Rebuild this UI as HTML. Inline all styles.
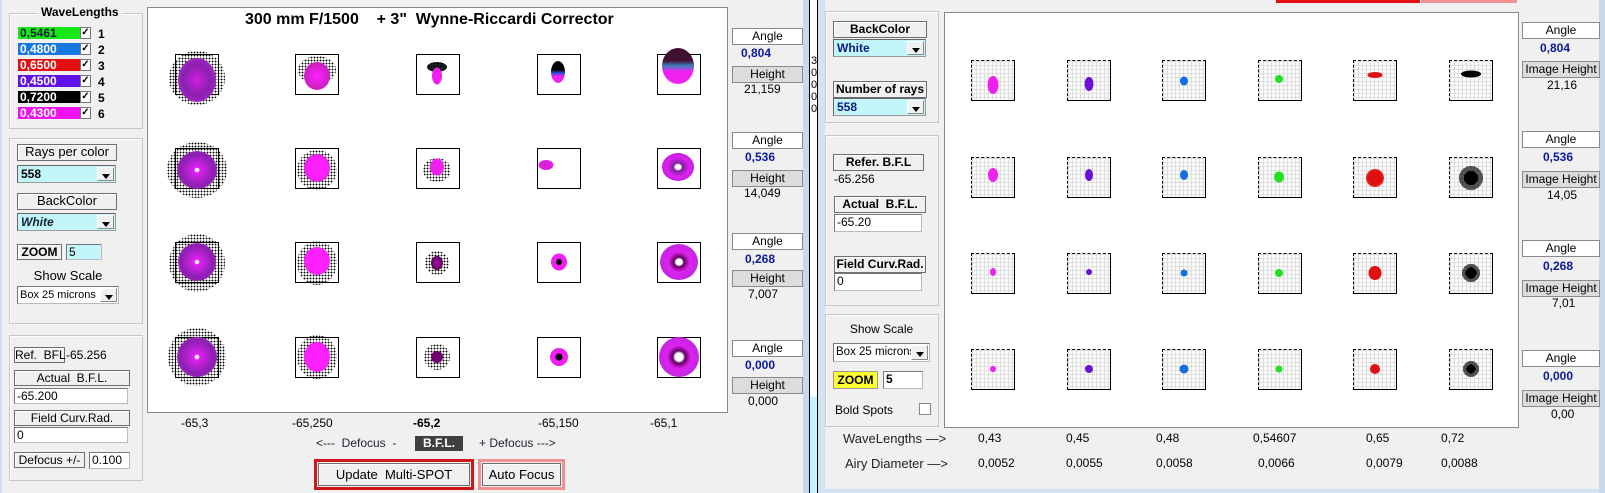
<!DOCTYPE html>
<html><head><meta charset="utf-8"><style>
*{margin:0;padding:0;box-sizing:border-box}
body{width:1605px;height:493px;background:#f0f0f0;position:relative;overflow:hidden;font-family:"Liberation Sans",sans-serif;font-size:12px;color:#000}
div,span{position:absolute}
.btn{background:#f0f0f0;border:1px solid #6e6e6e;box-shadow:inset 1px 1px #fff;text-align:center;white-space:nowrap;line-height:14px}
.gbtn{background:#dcdcdc;border:1px solid #8a8a8a;text-align:center;line-height:14px;white-space:nowrap}
.wbox{background:#fff;border:1px solid #8a8a8a;text-align:center;line-height:14px}
.inp{background:#fff;border:1px solid #bbb;border-top-color:#777;border-left-color:#777;line-height:15px;padding-left:2px;white-space:nowrap}
.cmb{background:#c2f6fb;border:1px solid #999;border-top-color:#666;border-left-color:#666;padding-left:3px;font-weight:bold;line-height:16px}
.arr{right:1px;top:1px;bottom:1px;width:17px;background:#f0f0f0;border:1px solid #888;border-top-color:#fff;border-left-color:#fff}
.arr:after{content:"";position:absolute;left:4px;top:6px;border:4px solid transparent;border-top:5px solid #000}
.grp{border:1px solid #c8c8c8;box-shadow:inset 1px 1px #fff}
.sq{border:1.5px solid #000;background:#fff;width:44px;height:41px}
.gq{width:44px;height:41px;border:1px dashed #000;border-right:1.5px solid #000;border-bottom:1.5px solid #000;background-color:#fbfbfb;background-image:linear-gradient(#dedede 1px,transparent 1px),linear-gradient(90deg,#dedede 1px,transparent 1px);background-size:4px 4px}
.dot{border-radius:50%;transform:translate(-50%,-50%)}
.dz{border-radius:50%;transform:translate(-50%,-50%);background-image:radial-gradient(#000 0.7px,transparent 1.1px);background-size:3px 3px}
.blue{color:#0a1a9a;font-weight:bold}
.ck{left:80px;width:11px;height:12px;background:#fff;border:1px solid #777;font-size:10px;line-height:10px;text-align:center;font-weight:bold}
</style></head><body>
<div style="left:0;top:0;width:2px;height:493px;background:#cfdff2"></div>

<div class="grp" style="left:9px;top:13px;width:134px;height:116px"></div>
<div style="left:38px;top:5px;background:#f0f0f0;padding:0 3px;font-weight:bold;font-size:12px">WaveLengths</div>
<div style="left:18px;top:27px;width:73px;height:12px;background:#18e818;color:#123;font-weight:bold;line-height:12px;padding-left:2px">0,5461</div>
<div style="left:18px;top:43px;width:73px;height:12px;background:#1878e0;color:#fff;font-weight:bold;line-height:12px;padding-left:2px">0,4800</div>
<div style="left:18px;top:59px;width:73px;height:12px;background:#e01010;color:#fff;font-weight:bold;line-height:12px;padding-left:2px">0,6500</div>
<div style="left:18px;top:75px;width:73px;height:12px;background:#6010e8;color:#fff;font-weight:bold;line-height:12px;padding-left:2px">0,4500</div>
<div style="left:18px;top:91px;width:73px;height:12px;background:#000;color:#fff;font-weight:bold;line-height:12px;padding-left:2px">0,7200</div>
<div style="left:18px;top:107px;width:73px;height:12px;background:#f010f0;color:#fff;font-weight:bold;line-height:12px;padding-left:2px">0,4300</div>
<div class="ck" style="top:27px">✓</div>
<div class="ck" style="top:43px">✓</div>
<div class="ck" style="top:59px">✓</div>
<div class="ck" style="top:75px">✓</div>
<div class="ck" style="top:91px">✓</div>
<div class="ck" style="top:107px">✓</div>
<div style="left:98px;top:26px;font-weight:bold;line-height:16px">1<br>2<br>3<br>4<br>5<br>6</div>

<div class="grp" style="left:9px;top:138px;width:134px;height:186px"></div>
<div class="btn" style="left:17px;top:144px;width:100px;height:17px;font-size:13px">Rays per color</div>
<div class="cmb" style="left:17px;top:165px;width:99px;height:18px">558<div class="arr"></div></div>
<div class="btn" style="left:17px;top:193px;width:100px;height:17px;font-size:13px">BackColor</div>
<div class="cmb" style="left:17px;top:213px;width:99px;height:18px;font-style:italic;color:#123">White<div class="arr"></div></div>
<div class="btn" style="left:17px;top:244px;width:45px;height:16px;font-weight:bold">ZOOM</div>
<div class="inp" style="left:66px;top:244px;width:36px;height:16px;background:#c2f6fb">5</div>
<div style="left:17px;top:268px;width:102px;text-align:center;font-size:13px">Show Scale</div>
<div class="inp" style="left:17px;top:286px;width:102px;height:18px;font-size:11px;line-height:16px;background:#fff">Box 25 microns<div class="arr"></div></div>

<div class="grp" style="left:9px;top:335px;width:134px;height:146px"></div>
<div class="btn" style="left:14px;top:347px;width:51px;height:16px">Ref.&nbsp; BFL</div>
<div style="left:66px;top:348px">-65.256</div>
<div class="btn" style="left:14px;top:370px;width:116px;height:16px">Actual&nbsp; B.F.L.</div>
<div class="inp" style="left:14px;top:388px;width:114px;height:16px">-65.200</div>
<div class="btn" style="left:14px;top:410px;width:116px;height:16px">Field Curv.Rad.</div>
<div class="inp" style="left:14px;top:427px;width:114px;height:16px">0</div>
<div class="btn" style="left:14px;top:452px;width:71px;height:16px">Defocus +/-</div>
<div class="inp" style="left:89px;top:452px;width:41px;height:17px">0.100</div>

<div style="left:147px;top:7px;width:581px;height:406px;background:#fff;border:1px solid #888"></div>
<div style="left:245px;top:11px;font-weight:bold;font-size:16px;white-space:pre">300 mm F/1500    + 3"  Wynne-Riccardi Corrector</div>

<div class="sq" style="left:175px;top:54px"></div><div class="sq" style="left:295px;top:54px"></div><div class="sq" style="left:416px;top:54px"></div><div class="sq" style="left:537px;top:54px"></div><div class="sq" style="left:657px;top:54px"></div>
<div class="sq" style="left:175px;top:148px"></div><div class="sq" style="left:295px;top:148px"></div><div class="sq" style="left:416px;top:148px"></div><div class="sq" style="left:537px;top:148px"></div><div class="sq" style="left:657px;top:148px"></div>
<div class="sq" style="left:175px;top:242px"></div><div class="sq" style="left:295px;top:242px"></div><div class="sq" style="left:416px;top:242px"></div><div class="sq" style="left:537px;top:242px"></div><div class="sq" style="left:657px;top:242px"></div>
<div class="sq" style="left:175px;top:337px"></div><div class="sq" style="left:295px;top:337px"></div><div class="sq" style="left:416px;top:337px"></div><div class="sq" style="left:537px;top:337px"></div><div class="sq" style="left:657px;top:337px"></div>

<div class="dz" style="left:197px;top:78px;width:56px;height:54px"></div>
<div class="dot" style="left:197px;top:80px;width:38px;height:44px;background:radial-gradient(#d020e0,#8a20b0 50%,#c030e0)"></div>
<div class="dz" style="left:317px;top:70px;width:38px;height:28px"></div>
<div class="dot" style="left:317px;top:76px;width:26px;height:28px;background:radial-gradient(#ff20ff,#b020a0)"></div>
<div class="dz" style="left:437px;top:67px;width:20px;height:10px;background-color:#222"></div>
<div class="dot" style="left:437px;top:76px;width:10px;height:17px;background:#f020f0"></div>
<div class="dot" style="left:558px;top:72px;width:14px;height:22px;background:linear-gradient(#000 40%,#3050e0 55%,#f020f0 70%)"></div>
<div class="dot" style="left:678px;top:66px;width:32px;height:36px;background:linear-gradient(#401030 35%,#4080c0 50%,#f020f0 65%)"></div>
<div class="dz" style="left:197px;top:170px;width:60px;height:56px"></div>
<div class="dot" style="left:197px;top:170px;width:40px;height:38px;background:radial-gradient(#fff 0 6%,#e020f0 10%,#8a20b0 60%,#d030e0)"></div>
<div class="dz" style="left:317px;top:170px;width:40px;height:40px"></div>
<div class="dot" style="left:317px;top:168px;width:26px;height:28px;background:radial-gradient(#ff20ff 50%,#c020c0)"></div>
<div class="dz" style="left:437px;top:170px;width:28px;height:24px"></div>
<div class="dot" style="left:437px;top:167px;width:14px;height:17px;background:#f020f0"></div>
<div class="dot" style="left:546px;top:165px;width:15px;height:10px;background:radial-gradient(#d020d0,#f020f0)"></div>
<div class="dot" style="left:678px;top:167px;width:32px;height:28px;background:radial-gradient(#fff 0 12%,#8020a0 20%,#e020f0 50%,#a020d0)"></div>
<div class="dz" style="left:197px;top:263px;width:56px;height:58px"></div>
<div class="dot" style="left:197px;top:262px;width:38px;height:38px;background:radial-gradient(#fff 0 6%,#e020f0 10%,#8a20b0 60%,#d030e0)"></div>
<div class="dz" style="left:317px;top:263px;width:40px;height:44px"></div>
<div class="dot" style="left:317px;top:261px;width:26px;height:28px;background:radial-gradient(#ff20ff 60%,#c020c0)"></div>
<div class="dz" style="left:437px;top:263px;width:24px;height:24px"></div>
<div class="dot" style="left:437px;top:263px;width:12px;height:14px;background:radial-gradient(#b010b0,#300030)"></div>
<div class="dot" style="left:559px;top:262px;width:16px;height:17px;background:radial-gradient(#000 0 20%,#f020f0 30%)"></div>
<div class="dot" style="left:679px;top:262px;width:38px;height:36px;background:radial-gradient(#fff 0 12%,#600060 18%,#e020f0 40%,#a030d0)"></div>
<div class="dz" style="left:197px;top:357px;width:58px;height:58px"></div>
<div class="dot" style="left:197px;top:357px;width:40px;height:40px;background:radial-gradient(#fff 0 6%,#e020f0 10%,#8a20b0 60%,#d030e0)"></div>
<div class="dz" style="left:317px;top:357px;width:40px;height:44px"></div>
<div class="dot" style="left:317px;top:357px;width:26px;height:30px;background:radial-gradient(#ff20ff 60%,#c020c0)"></div>
<div class="dz" style="left:437px;top:357px;width:26px;height:26px"></div>
<div class="dot" style="left:437px;top:357px;width:12px;height:12px;background:#700070"></div>
<div class="dot" style="left:559px;top:357px;width:18px;height:18px;background:radial-gradient(#000 0 22%,#f020f0 32%)"></div>
<div class="dot" style="left:679px;top:357px;width:40px;height:40px;background:radial-gradient(#fff 0 14%,#600060 22%,#e020f0 42%,#a030d0)"></div>

<div class="wbox" style="left:732px;top:28px;width:71px;height:17px">Angle</div>
<div class="blue" style="left:741px;top:46px">0,804</div>
<div class="gbtn" style="left:732px;top:66px;width:71px;height:17px">Height</div>
<div style="left:744px;top:82px">21,159</div>
<div class="wbox" style="left:732px;top:132px;width:71px;height:17px">Angle</div>
<div class="blue" style="left:745px;top:150px">0,536</div>
<div class="gbtn" style="left:732px;top:170px;width:71px;height:17px">Height</div>
<div style="left:744px;top:186px">14,049</div>
<div class="wbox" style="left:732px;top:233px;width:71px;height:17px">Angle</div>
<div class="blue" style="left:745px;top:252px">0,268</div>
<div class="gbtn" style="left:732px;top:270px;width:71px;height:17px">Height</div>
<div style="left:748px;top:287px">7,007</div>
<div class="wbox" style="left:732px;top:340px;width:71px;height:17px">Angle</div>
<div class="blue" style="left:745px;top:358px">0,000</div>
<div class="gbtn" style="left:732px;top:377px;width:71px;height:17px">Height</div>
<div style="left:748px;top:394px">0,000</div>

<div style="left:181px;top:416px">-65,3</div>
<div style="left:292px;top:416px">-65,250</div>
<div style="left:413px;top:416px;font-weight:bold">-65,2</div>
<div style="left:538px;top:416px">-65,150</div>
<div style="left:650px;top:416px">-65,1</div>
<div style="left:316px;top:436px;color:#223;white-space:pre">&lt;---  Defocus  -</div>
<div style="left:415px;top:436px;width:48px;height:15px;background:#404040;color:#fff;font-weight:bold;text-align:center;line-height:15px">B.F.L.</div>
<div style="left:479px;top:436px;color:#223">+ Defocus ---&gt;</div>
<div style="left:314px;top:459px;width:160px;height:31px;border:3px solid #d01818;background:#f0f0f0"><div class="btn" style="left:1px;top:1px;width:152px;height:23px;line-height:21px;font-size:13px">Update&nbsp; Multi-SPOT</div></div>
<div style="left:478px;top:459px;width:87px;height:31px;border:3px solid #f09090;background:#f0f0f0"><div class="btn" style="left:1px;top:1px;width:79px;height:23px;line-height:21px;font-size:13px">Auto Focus</div></div>

<div style="left:803px;top:0;width:6px;height:493px;background:#c8d8ee"></div>
<div style="left:809px;top:0;width:9px;height:493px;background:#fff;border-left:1px solid #000;border-right:1px solid #000"></div>
<div style="left:811px;top:55px;font-size:11px;line-height:12px">3<br>0<br>0<br>0<br>0</div>
<div style="left:810px;top:397px;width:7px;height:96px;background:#c2f6fb"></div>
<div style="left:818px;top:0;width:7px;height:493px;background:#d4e2f4"></div>
<div style="left:825px;top:489px;width:780px;height:4px;background:#d4e2f4"></div>
<div style="left:1599px;top:0;width:6px;height:493px;background:#c8d8ee"></div>
<div style="left:1276px;top:0;width:144px;height:3px;background:#e01010"></div>
<div style="left:1421px;top:0;width:96px;height:3px;background:#f09090"></div>

<div class="grp" style="left:825px;top:11px;width:114px;height:112px"></div>
<div class="btn" style="left:833px;top:21px;width:94px;height:17px;font-weight:bold">BackColor</div>
<div class="cmb" style="left:833px;top:39px;width:93px;height:18px;color:#0a1a80">White<div class="arr"></div></div>
<div class="btn" style="left:833px;top:81px;width:94px;height:17px;font-weight:bold">Number of rays</div>
<div class="cmb" style="left:833px;top:98px;width:93px;height:18px;color:#0a1a80">558<div class="arr"></div></div>
<div class="grp" style="left:825px;top:135px;width:114px;height:171px"></div>
<div class="btn" style="left:833px;top:154px;width:91px;height:17px;font-weight:bold">Refer. B.F.L</div>
<div style="left:834px;top:172px">-65.256</div>
<div class="btn" style="left:834px;top:196px;width:92px;height:17px;font-weight:bold">Actual&nbsp; B.F.L.</div>
<div class="inp" style="left:834px;top:214px;width:88px;height:18px">-65.20</div>
<div class="btn" style="left:834px;top:256px;width:92px;height:17px;font-weight:bold">Field Curv.Rad.</div>
<div class="inp" style="left:834px;top:273px;width:88px;height:18px">0</div>
<div class="grp" style="left:825px;top:314px;width:114px;height:113px"></div>
<div style="left:833px;top:322px;width:97px;text-align:center">Show Scale</div>
<div class="inp" style="left:833px;top:343px;width:97px;height:19px;line-height:17px;font-size:11.5px">Box 25 microns<div class="arr"></div></div>
<div style="left:833px;top:371px;width:45px;height:18px;background:#ffff30;border:1px solid #999;font-weight:bold;text-align:center;line-height:16px">ZOOM</div>
<div class="inp" style="left:883px;top:371px;width:40px;height:18px;font-weight:bold">5</div>
<div style="left:835px;top:403px">Bold Spots</div>
<div style="left:919px;top:403px;width:12px;height:12px;background:#fff;border:1px solid #888"></div>

<div style="left:944px;top:12px;width:575px;height:416px;background:#fff;border:1px solid #888"></div>
<div class="gq" style="left:971px;top:60px"></div><div class="gq" style="left:1067px;top:60px"></div><div class="gq" style="left:1162px;top:60px"></div><div class="gq" style="left:1258px;top:60px"></div><div class="gq" style="left:1353px;top:60px"></div><div class="gq" style="left:1449px;top:60px"></div>
<div class="gq" style="left:971px;top:157px"></div><div class="gq" style="left:1067px;top:157px"></div><div class="gq" style="left:1162px;top:157px"></div><div class="gq" style="left:1258px;top:157px"></div><div class="gq" style="left:1353px;top:157px"></div><div class="gq" style="left:1449px;top:157px"></div>
<div class="gq" style="left:971px;top:253px"></div><div class="gq" style="left:1067px;top:253px"></div><div class="gq" style="left:1162px;top:253px"></div><div class="gq" style="left:1258px;top:253px"></div><div class="gq" style="left:1353px;top:253px"></div><div class="gq" style="left:1449px;top:253px"></div>
<div class="gq" style="left:971px;top:349px"></div><div class="gq" style="left:1067px;top:349px"></div><div class="gq" style="left:1162px;top:349px"></div><div class="gq" style="left:1258px;top:349px"></div><div class="gq" style="left:1353px;top:349px"></div><div class="gq" style="left:1449px;top:349px"></div>
<div class="dot" style="left:993px;top:85px;width:11px;height:18px;background:#f020f0"></div>
<div class="dot" style="left:1089px;top:84px;width:9px;height:14px;background:#6a10d8"></div>
<div class="dot" style="left:1184px;top:81px;width:8px;height:9px;background:#1070e0"></div>
<div class="dot" style="left:1279px;top:79px;width:8px;height:8px;background:#20e020"></div>
<div class="dot" style="left:1375px;top:75px;width:15px;height:6px;background:#e01010"></div>
<div class="dot" style="left:1471px;top:74px;width:20px;height:7px;background:#000"></div>
<div class="dot" style="left:993px;top:175px;width:10px;height:14px;background:#f020f0"></div>
<div class="dot" style="left:1089px;top:175px;width:8px;height:12px;background:#6a10d8"></div>
<div class="dot" style="left:1184px;top:175px;width:8px;height:10px;background:#1070e0"></div>
<div class="dot" style="left:1279px;top:177px;width:10px;height:11px;background:#20e020"></div>
<div class="dot" style="left:1375px;top:178px;width:18px;height:18px;background:radial-gradient(#e01010 55%,#f07070)"></div>
<div class="dz" style="left:1471px;top:178px;width:24px;height:24px;background-size:2px 2px"></div>
<div class="dot" style="left:1471px;top:178px;width:14px;height:14px;background:#000"></div>
<div class="dot" style="left:993px;top:272px;width:6px;height:8px;background:#f020f0"></div>
<div class="dot" style="left:1089px;top:272px;width:6px;height:6px;background:#6a10d8"></div>
<div class="dot" style="left:1184px;top:273px;width:7px;height:7px;background:#1070e0"></div>
<div class="dot" style="left:1279px;top:273px;width:8px;height:8px;background:#20e020"></div>
<div class="dot" style="left:1375px;top:273px;width:13px;height:14px;background:#e01010"></div>
<div class="dz" style="left:1471px;top:273px;width:18px;height:18px;background-size:2px 2px"></div>
<div class="dot" style="left:1471px;top:273px;width:11px;height:11px;background:#000"></div>
<div class="dot" style="left:993px;top:369px;width:6px;height:6px;background:#f020f0"></div>
<div class="dot" style="left:1089px;top:369px;width:8px;height:8px;background:#6a10d8"></div>
<div class="dot" style="left:1184px;top:369px;width:9px;height:9px;background:#1070e0"></div>
<div class="dot" style="left:1279px;top:369px;width:7px;height:7px;background:#20e020"></div>
<div class="dot" style="left:1375px;top:369px;width:10px;height:10px;background:#e01010"></div>
<div class="dz" style="left:1471px;top:369px;width:16px;height:16px;background-size:2px 2px"></div>
<div class="dot" style="left:1471px;top:369px;width:9px;height:9px;background:#000"></div>

<div class="wbox" style="left:1522px;top:22px;width:78px;height:17px">Angle</div>
<div class="blue" style="left:1540px;top:41px">0,804</div>
<div class="gbtn" style="left:1522px;top:61px;width:78px;height:17px">Image Height</div>
<div style="left:1547px;top:78px">21,16</div>
<div class="wbox" style="left:1522px;top:131px;width:78px;height:17px">Angle</div>
<div class="blue" style="left:1543px;top:150px">0,536</div>
<div class="gbtn" style="left:1522px;top:171px;width:78px;height:17px">Image Height</div>
<div style="left:1547px;top:188px">14,05</div>
<div class="wbox" style="left:1522px;top:240px;width:78px;height:17px">Angle</div>
<div class="blue" style="left:1543px;top:259px">0,268</div>
<div class="gbtn" style="left:1522px;top:280px;width:78px;height:17px">Image Height</div>
<div style="left:1552px;top:296px">7,01</div>
<div class="wbox" style="left:1522px;top:350px;width:78px;height:17px">Angle</div>
<div class="blue" style="left:1543px;top:369px">0,000</div>
<div class="gbtn" style="left:1522px;top:390px;width:78px;height:17px">Image Height</div>
<div style="left:1551px;top:407px">0,00</div>

<div style="left:843px;top:431px;font-size:13px;color:#222">WaveLengths —&gt;</div>
<div style="left:845px;top:456px;font-size:13px;color:#222">Airy Diameter —&gt;</div>
<div style="left:978px;top:431px">0,43</div><div style="left:1066px;top:431px">0,45</div><div style="left:1156px;top:431px">0,48</div><div style="left:1253px;top:431px">0,54607</div><div style="left:1366px;top:431px">0,65</div><div style="left:1441px;top:431px">0,72</div>
<div style="left:978px;top:456px">0,0052</div><div style="left:1066px;top:456px">0,0055</div><div style="left:1156px;top:456px">0,0058</div><div style="left:1258px;top:456px">0,0066</div><div style="left:1366px;top:456px">0,0079</div><div style="left:1441px;top:456px">0,0088</div>
</body></html>
